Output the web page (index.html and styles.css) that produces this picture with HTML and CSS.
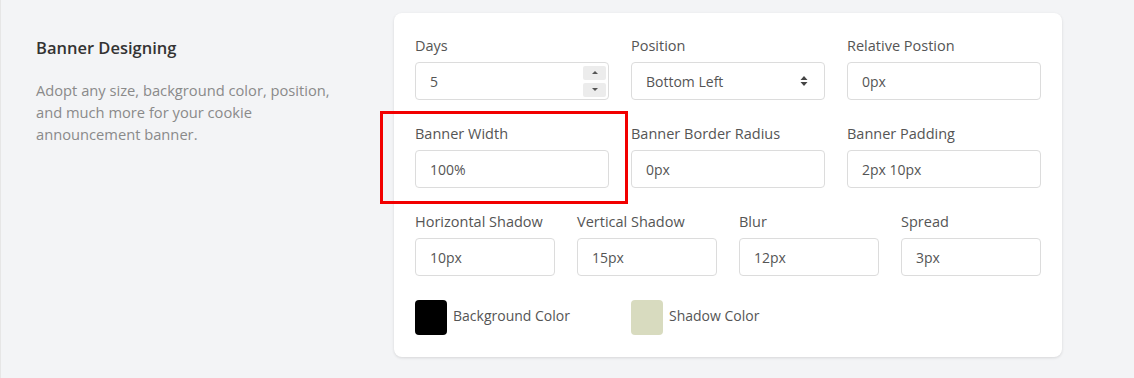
FILE: index.html
```html
<!DOCTYPE html>
<html lang="en">
<head>
    <meta charset="UTF-8">
    <meta name="viewport" content="width=device-width, initial-scale=1.0">
    <title>Banner Designing</title>
    <link rel="stylesheet" href="styles.css">
</head>
<body>
<div class="page">
    <div class="section">
        <!-- Left description -->
        <div class="intro">
            <h3>Banner Designing</h3>
            <p>Adopt any size, background color, position, and much more for your cookie announcement banner.</p>
        </div>

        <!-- Settings card -->
        <div class="card">
            <div class="row three">
                <div class="field">
                    <label>Days</label>
                    <div class="input number">
                        <span>5</span>
                        <div class="spin">
                            <div class="spin-btn"><span class="tri up"></span></div>
                            <div class="spin-btn"><span class="tri down"></span></div>
                        </div>
                    </div>
                </div>
                <div class="field">
                    <label>Position</label>
                    <div class="input select">
                        <span>Bottom Left</span>
                        <svg width="8" height="12" viewBox="0 0 8 12"><path d="M4 1 L7.5 5 H0.5 Z M4 11 L7.5 7 H0.5 Z" fill="#444"/></svg>
                    </div>
                </div>
                <div class="field">
                    <label>Relative Postion</label>
                    <div class="input">0px</div>
                </div>
            </div>

            <div class="row three">
                <div class="field highlight">
                    <label>Banner Width</label>
                    <div class="input">100%</div>
                </div>
                <div class="field">
                    <label>Banner Border Radius</label>
                    <div class="input">0px</div>
                </div>
                <div class="field">
                    <label>Banner Padding</label>
                    <div class="input">2px 10px</div>
                </div>
            </div>

            <div class="row four">
                <div class="field">
                    <label>Horizontal Shadow</label>
                    <div class="input">10px</div>
                </div>
                <div class="field">
                    <label>Vertical Shadow</label>
                    <div class="input">15px</div>
                </div>
                <div class="field">
                    <label>Blur</label>
                    <div class="input">12px</div>
                </div>
                <div class="field">
                    <label>Spread</label>
                    <div class="input">3px</div>
                </div>
            </div>

            <div class="colors">
                <div class="color">
                    <span class="swatch black"></span>
                    <span>Background Color</span>
                </div>
                <div class="color">
                    <span class="swatch sage"></span>
                    <span>Shadow Color</span>
                </div>
            </div>
        </div>
    </div>

    <!-- next card, cut off -->
    <div class="next-card"></div>
</div>
</body>
</html>
```

FILE: styles.css
```css
body {
    margin: 0;
    font-family: "Open Sans", Arial, sans-serif;
    background-color: #f3f4f6;
    color: #444;
}

.page {
    border-left: 1px solid #e6e6e6;
    height: 378px;
    overflow: hidden;
    padding: 13px 0 0 35px;
    box-sizing: border-box;
}

.section {
    display: flex;
}

.intro {
    width: 310px;
    margin-right: 48px;
    padding-top: 23px;
}

.intro h3 {
    margin: 0;
    font-size: 16.5px;
    font-weight: 600;
    color: #333;
}

.intro p {
    margin: 20px 0 0;
    font-size: 14.7px;
    line-height: 22px;
    color: #8a8a8a;
}

.card {
    background: white;
    width: 668px;
    box-sizing: border-box;
    padding: 23px 21px 22px;
    border-radius: 8px;
    box-shadow: 0 1px 3px rgba(0, 0, 0, 0.12);
}

.row {
    display: grid;
    gap: 22px;
    margin-bottom: 24px;
}

.row.three {
    grid-template-columns: repeat(3, 1fr);
}

.row.four {
    grid-template-columns: repeat(4, 1fr);
}

.field {
    position: relative;
}

.field label {
    display: block;
    font-size: 14.5px;
    line-height: 20px;
    margin-bottom: 6px;
    color: #555;
}

.input {
    height: 38px;
    box-sizing: border-box;
    border: 1px solid #dcdcdc;
    border-radius: 4px;
    padding: 0 14px;
    display: flex;
    align-items: center;
    font-size: 14px;
    color: #555;
}

.input.number {
    justify-content: space-between;
    padding-right: 2px;
}

.spin {
    display: flex;
    flex-direction: column;
    gap: 3px;
}

.spin-btn {
    width: 23px;
    height: 14px;
    background: #ececec;
    border-radius: 2px;
    display: flex;
    align-items: center;
    justify-content: center;
}

.tri {
    width: 0;
    height: 0;
    border-left: 3px solid transparent;
    border-right: 3px solid transparent;
}

.tri.up {
    border-bottom: 3px solid #555;
}

.tri.down {
    border-top: 3px solid #555;
}

.input.select {
    justify-content: space-between;
    padding-right: 16px;
}

/* red box drawn over the screenshot */
.highlight::after {
    content: "";
    position: absolute;
    left: -35px;
    top: -13px;
    width: 242px;
    height: 87px;
    border: 3px solid #f20000;
}

.colors {
    display: flex;
    margin-top: 18px;
}

.color {
    display: flex;
    align-items: center;
    width: 216px;
    font-size: 14px;
    color: #555;
}

.color span:last-child {
    margin-top: -4px;
}

.swatch {
    width: 32px;
    height: 35px;
    border-radius: 4px;
    margin-right: 6px;
}

.swatch.black {
    background: #000;
}

.swatch.sage {
    background: #d8dbbf;
}

.next-card {
    margin: 21px 0 0 359px;
    width: 668px;
    height: 20px;
    background: #f7f9fa;
    border-top: 2px solid #dde6ea;
    border-radius: 6px 6px 0 0;
}
```
